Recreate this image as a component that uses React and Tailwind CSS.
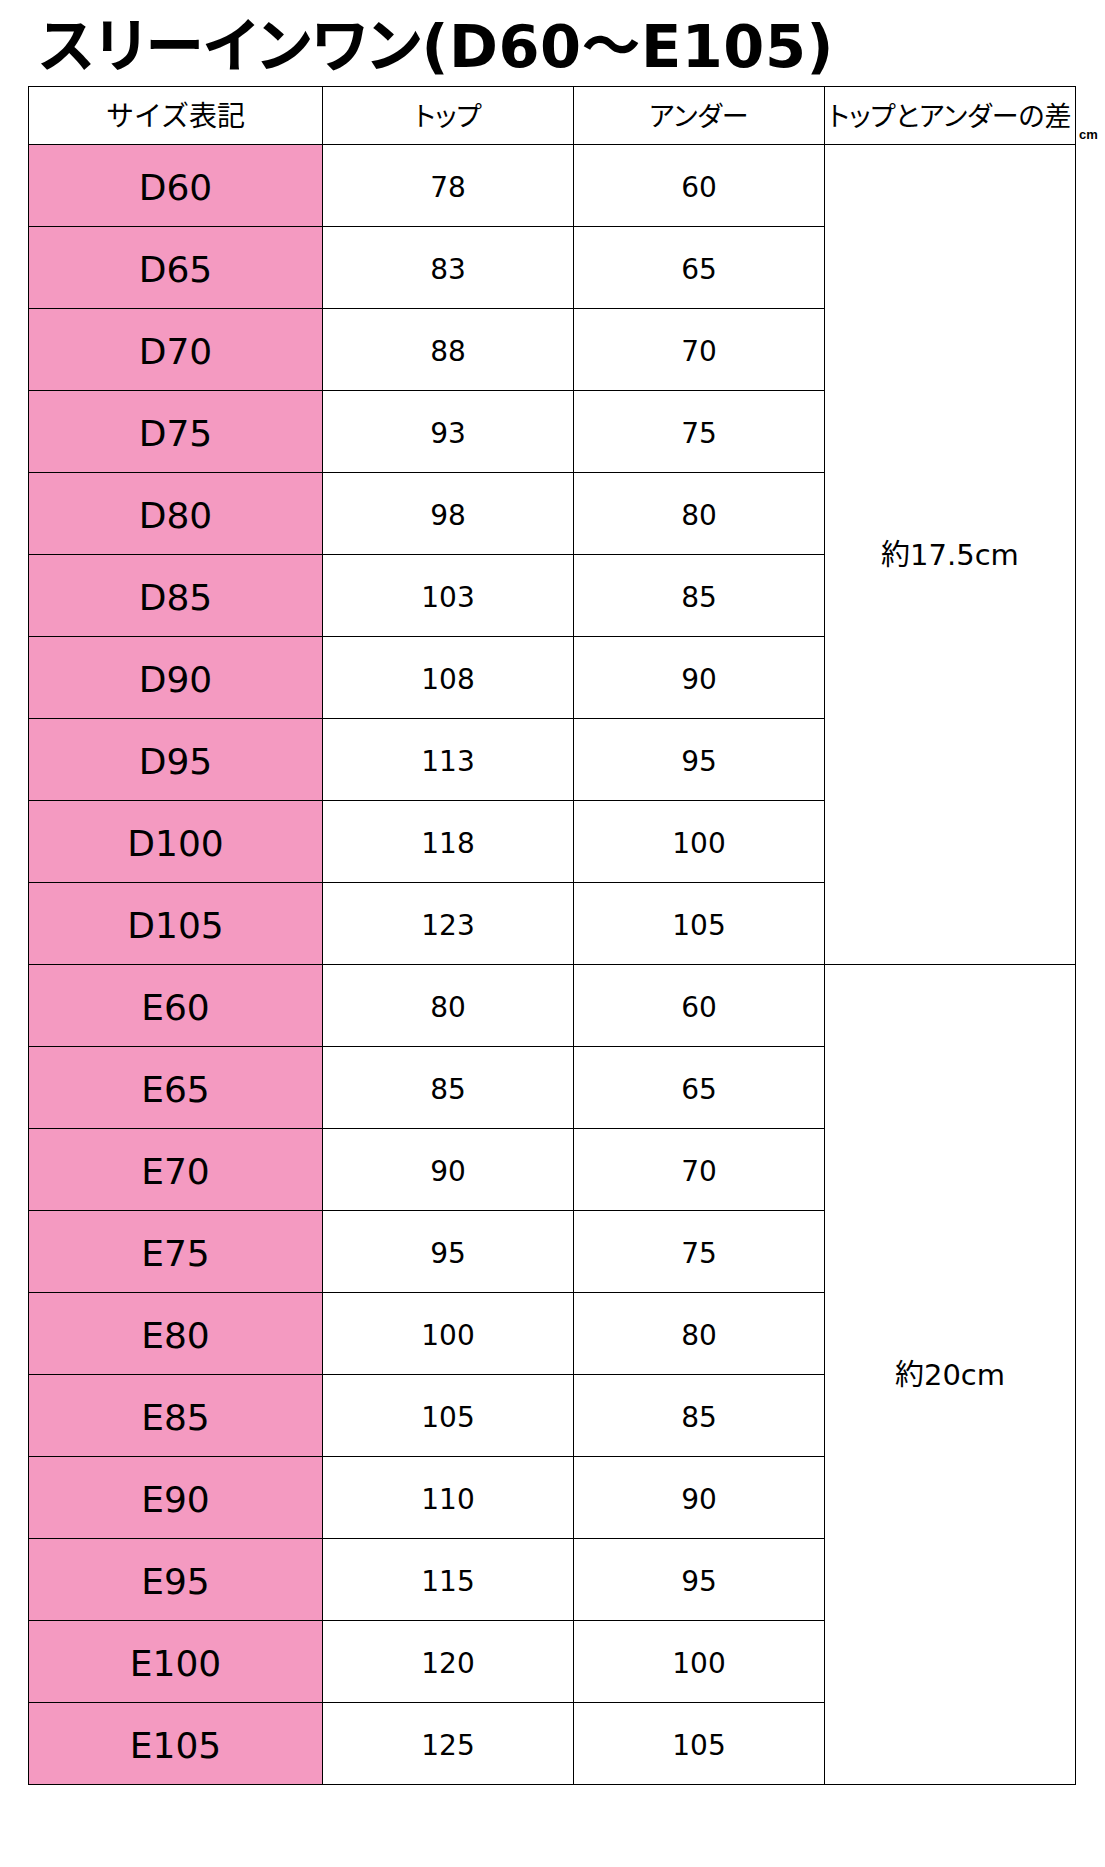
import React from 'react';

const rows = [
    { size: 'D60', top: 78, under: 60 },
    { size: 'D65', top: 83, under: 65 },
    { size: 'D70', top: 88, under: 70 },
    { size: 'D75', top: 93, under: 75 },
    { size: 'D80', top: 98, under: 80 },
    { size: 'D85', top: 103, under: 85 },
    { size: 'D90', top: 108, under: 90 },
    { size: 'D95', top: 113, under: 95 },
    { size: 'D100', top: 118, under: 100 },
    { size: 'D105', top: 123, under: 105 },
    { size: 'E60', top: 80, under: 60 },
    { size: 'E65', top: 85, under: 65 },
    { size: 'E70', top: 90, under: 70 },
    { size: 'E75', top: 95, under: 75 },
    { size: 'E80', top: 100, under: 80 },
    { size: 'E85', top: 105, under: 85 },
    { size: 'E90', top: 110, under: 90 },
    { size: 'E95', top: 115, under: 95 },
    { size: 'E100', top: 120, under: 100 },
    { size: 'E105', top: 125, under: 105 },
];

const cell = 'flex items-center justify-center border-r border-b border-black';

function App() {
    return (
        <div className="w-[1105px] h-[1867px] bg-white text-black font-['DejaVu_Sans','Noto_Sans_CJK_JP',sans-serif] [font-feature-settings:'palt']">
            <h1 className="h-[86px] pl-[39px] pt-[6px] flex items-center text-[59px] font-bold leading-none tracking-[0.5px]">
                スリーインワン(D60～E105)
            </h1>
            <div className="flex pl-[28px]">
                <div className="grid grid-cols-[294px_251px_251px_251px] grid-rows-[58px_repeat(20,82px)] border-l border-t border-black">
                    <div className={`${cell} pt-[3px] text-[28px] [font-feature-settings:normal]`}>サイズ表記</div>
                    <div className={`${cell} pt-[3px] text-[27px]`}>トップ</div>
                    <div className={`${cell} pt-[3px] text-[27px]`}>アンダー</div>
                    <div className={`${cell} pt-[3px] text-[27px]`}>トップとアンダーの差</div>
                    {rows.map((row, i) => (
                        <React.Fragment key={row.size}>
                            <div className={`${cell} pt-[4px] bg-[#f49ac1] text-[36px]`}>{row.size}</div>
                            <div className={`${cell} pt-[4px] text-[28px]`}>{row.top}</div>
                            <div className={`${cell} pt-[4px] text-[28px]`}>{row.under}</div>
                            {i === 0 && (
                                <div className={`${cell} row-span-10 pt-[3px] text-[29px]`}>約17.5cm</div>
                            )}
                            {i === 10 && (
                                <div className={`${cell} row-span-10 pt-[3px] text-[29px]`}>約20cm</div>
                            )}
                        </React.Fragment>
                    ))}
                </div>
                <div className="mt-[42px] ml-[3px] text-[13px] font-bold leading-none font-['Liberation_Sans',sans-serif]">cm</div>
            </div>
        </div>
    );
}

export default App;
